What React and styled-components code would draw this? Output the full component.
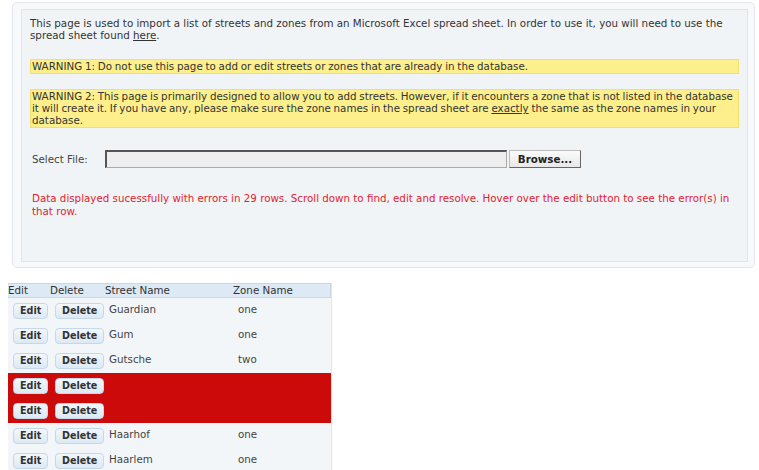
import React from 'react';
import styled, { createGlobalStyle } from 'styled-components';

const GlobalStyle = createGlobalStyle`
  html, body { margin: 0; padding: 0; background: #fff; }
  body {
    font-family: "DejaVu Sans", Verdana, sans-serif;
    font-size: 10.3px;
    color: #333;
  }
`;

const Page = styled.div`
  padding: 2px 4px 0 8px;
`;

const Outer = styled.div`
  margin-left: 4px;
  background: #f8f9fb;
  border: 1px solid #e2e6ea;
  border-radius: 5px;
  padding: 6px 6px 5px 8px;
`;

const Inner = styled.div`
  background: #f1f4f7;
  border: 1px solid #dfe4e8;
  padding: 7px 8px 0 8px;
  min-height: 253px;
  box-sizing: border-box;
`;

const Para = styled.p`
  margin: 0 0 18px;
  line-height: 12px;
`;

const Warning = styled.p`
  margin: 0 0 15px;
  line-height: 12px;
  background: #fdf08c;
  border: 1px solid #f3df6a;
  padding: 0 0 1px 1px;
  word-spacing: -0.5px;
`;

const Link = styled.span`
  text-decoration: underline;
`;

const FileRow = styled.div`
  display: flex;
  align-items: center;
  margin: 22px 0 0 2px;
  height: 18px;
`;

const Label = styled.span`
  width: 73px;
  color: #444;
`;

const FileBox = styled.div`
  width: 399px;
  height: 15px;
  background: #eeeeee;
  border: 1px solid #aaa;
  border-top: 2px solid #555;
  border-left: 2px solid #555;
`;

const Browse = styled.div`
  margin-left: 2px;
  width: 70px;
  height: 16px;
  background: linear-gradient(#fbfbfb, #e8e8e8);
  border: 1px solid #bbb;
  border-right: 1px solid #666;
  border-bottom: 1px solid #666;
  font-weight: bold;
  color: #222;
  display: flex;
  align-items: center;
  justify-content: center;
`;

const ErrorText = styled.p`
  color: #e3222d;
  margin: 24px 0 0 2px;
  line-height: 13px;
`;

const Table = styled.div`
  margin-top: 15px;
  width: 323px;
  border-right: 1px solid #dde6ee;
`;

const Header = styled.div`
  display: grid;
  grid-template-columns: 42px 55px 128px 1fr;
  height: 13px;
  line-height: 13px;
  background: #dde9f4;
  border: 1px solid #c9d8e6;
  border-left: none;
  color: #333;
`;

const Row = styled.div`
  display: grid;
  grid-template-columns: 42px 54px 129px 1fr;
  align-items: center;
  height: 25px;
  padding-left: 5px;
  background: ${p => (p.$error ? '#cc0a0a' : '#f3f6f9')};
`;

const Btn = styled.span`
  justify-self: start;
  font-weight: bold;
  font-size: 9.6px;
  color: #333;
  background: linear-gradient(#f1f7fc, #dce9f4);
  border: 1px solid #c5d7e8;
  border-radius: 4px;
  padding: 1px 6px;
  line-height: 12px;
`;

const Cell = styled.span`
  color: #444;
  margin-top: -4px;
`;

const rows = [
  { street: 'Guardian', zone: 'one' },
  { street: 'Gum', zone: 'one' },
  { street: 'Gutsche', zone: 'two' },
  { error: true },
  { error: true },
  { street: 'Haarhof', zone: 'one' },
  { street: 'Haarlem', zone: 'one' },
];

export default function App() {
  return (
    <Page>
      <GlobalStyle />
      <Outer>
        <Inner>
          <Para>
            This page is used to import a list of streets and zones from an Microsoft Excel spread sheet. In order to use it, you will need to use the spread sheet found <Link>here</Link>.
          </Para>
          <Warning>WARNING 1: Do not use this page to add or edit streets or zones that are already in the database.</Warning>
          <Warning>
            WARNING 2: This page is primarily designed to allow you to add streets. However, if it encounters a zone that is not listed in the database it will create it. If you have any, please make sure the zone names in the spread sheet are <Link>exactly</Link> the same as the zone names in your database.
          </Warning>
          <FileRow>
            <Label>Select File:</Label>
            <FileBox />
            <Browse>Browse...</Browse>
          </FileRow>
          <ErrorText>
            Data displayed sucessfully with errors in 29 rows. Scroll down to find, edit and resolve. Hover over the edit button to see the error(s) in that row.
          </ErrorText>
        </Inner>
      </Outer>
      <Table>
        <Header>
          <span>Edit</span>
          <span>Delete</span>
          <span>Street Name</span>
          <span>Zone Name</span>
        </Header>
        {rows.map((r, i) => (
          <Row key={i} $error={r.error}>
            <Btn>Edit</Btn>
            <Btn>Delete</Btn>
            <Cell>{r.street}</Cell>
            <Cell>{r.zone}</Cell>
          </Row>
        ))}
      </Table>
    </Page>
  );
}
